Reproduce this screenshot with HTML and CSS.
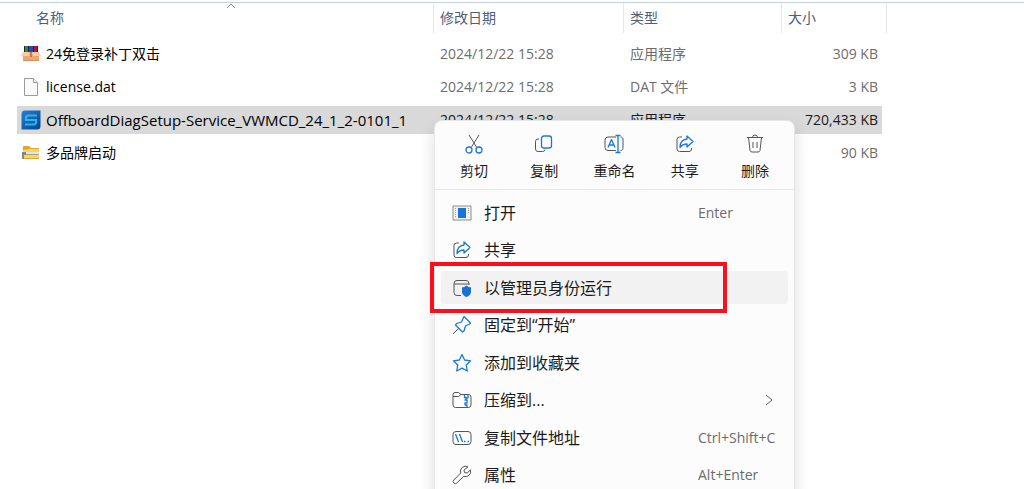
FILE: index.html
```html
<!DOCTYPE html>
<html lang="zh-CN">
<head>
    <meta charset="UTF-8">
    <meta name="viewport" content="width=device-width, initial-scale=1.0">
    <title>文件资源管理器</title>
    <link rel="stylesheet" href="styles.css">
</head>
<body>
    <!-- File list -->
    <main class="explorer">
        <table class="file-table">
            <thead>
                <tr>
                    <th class="col-name">
                        名称
                        <svg class="sort-caret" width="10" height="6" viewBox="0 0 10 6"><path d="M1 5l4-4 4 4"/></svg>
                    </th>
                    <th class="col-date">修改日期</th>
                    <th class="col-type">类型</th>
                    <th class="col-size">大小</th>
                </tr>
            </thead>
            <tbody>
                <tr>
                    <td class="name">
                        <div class="file">
                            <svg class="file-icon" width="20" height="20" viewBox="0 0 20 20">
                                <path fill="#20242c" d="M3 2h14v8H3z"/>
                                <path fill="#1f8f4a" d="M4 2h3v7H4z"/>
                                <path fill="#2448c8" d="M8 2h4v7H8z"/>
                                <path fill="#b01838" d="M13 2h3v7h-3z"/>
                                <path fill="#eda672" d="M2 9h16v8H2z"/>
                                <path fill="#fccb9e" d="M2 8h7l-1 4H0zM11 8h7l2 4h-8z"/>
                                <path fill="#c47a4b" d="M9 8h2v5H9z"/>
                                <path fill="#d98c58" d="M2 16h16v1H2z"/>
                            </svg>
                            24免登录补丁双击
                        </div>
                    </td>
                    <td>2024/12/22 15:28</td>
                    <td>应用程序</td>
                    <td class="size">309 KB</td>
                </tr>
                <tr>
                    <td class="name">
                        <div class="file">
                            <svg class="file-icon" width="20" height="20" viewBox="0 0 20 20">
                                <path fill="#fafafa" stroke="#9a9a9a" d="M3.500 1.500h9l4 4v13h-13z"/>
                                <path fill="#fff" stroke="#9a9a9a" d="M12.500 1.500v4h4"/>
                            </svg>
                            license.dat
                        </div>
                    </td>
                    <td>2024/12/22 15:28</td>
                    <td>DAT 文件</td>
                    <td class="size">3 KB</td>
                </tr>
                <tr class="selected">
                    <td class="name">
                        <div class="file">
                            <svg class="file-icon" width="20" height="20" viewBox="0 0 20 20">
                                <defs>
                                    <linearGradient id="appBlue" x1="0" y1="0" x2="1" y2="1">
                                        <stop offset="0" stop-color="#2b7fd0"/>
                                        <stop offset="1" stop-color="#07418f"/>
                                    </linearGradient>
                                </defs>
                                <path fill="url(#appBlue)" d="M4 0.500h15.500V16a3.500 3.500 0 0 1-3.500 3.500H0.500V4A3.500 3.500 0 0 1 4 0.500z"/>
                                <path fill="none" stroke="#25b5ee" stroke-width="2.200" d="M16 5.500H6.500L5 7v3h10v3l-1.500 1.500H4"/>
                            </svg>
                            OffboardDiagSetup-Service_VWMCD_24_1_2-0101_1
                        </div>
                    </td>
                    <td>2024/12/22 15:28</td>
                    <td>应用程序</td>
                    <td class="size">720,433 KB</td>
                </tr>
                <tr>
                    <td class="name">
                        <div class="file">
                            <svg class="file-icon" width="20" height="20" viewBox="0 0 20 20">
                                <path fill="#e5a52b" d="M2 4a1 1 0 0 1 1-1h5l2 2h8v3H2z"/>
                                <path fill="#fbd468" d="M2 7l7-1h9v10H2z"/>
                                <path fill="#e0a93a" d="M2 15h16v1H2z"/>
                                <path fill="#e8e6dc" d="M5 9h13v2H5z"/>
                                <path fill="#a9a187" d="M5 11h13v1H5z"/>
                                <path fill="#85868a" d="M1 9h4v3H3v4H1z"/>
                            </svg>
                            多品牌启动
                        </div>
                    </td>
                    <td></td>
                    <td></td>
                    <td class="size">90 KB</td>
                </tr>
            </tbody>
        </table>
    </main>

    <!-- Context menu -->
    <div class="context-menu">
        <div class="quick-actions">
            <button class="quick-btn">
                <svg class="icon" width="20" height="20" viewBox="0 0 20 20">
                    <path d="M5 1l7.500 12M15 1L7.500 13"/>
                    <circle class="blue" cx="5" cy="16" r="3"/>
                    <circle class="blue" cx="15" cy="16" r="3"/>
                </svg>
                剪切
            </button>
            <button class="quick-btn">
                <svg class="icon" width="20" height="20" viewBox="0 0 20 20">
                    <path d="M5 5H4a2.500 2.500 0 0 0-2.500 2.500V15A2.500 2.500 0 0 0 4 17.500h4.500a2.500 2.500 0 0 0 2.500-2"/>
                    <rect class="blue" x="7.500" y="2" width="10" height="12" rx="2.500"/>
                </svg>
                复制
            </button>
            <button class="quick-btn">
                <svg class="icon" width="20" height="20" viewBox="0 0 20 20">
                    <path d="M12 3H4a3 3 0 0 0-3 3v7.500a3 3 0 0 0 3 3h8M16.500 3a2.500 2.500 0 0 1 2.500 3v7.500a2.500 2.500 0 0 1-2.500 3"/>
                    <path class="blue" d="M4 13.500L7.500 5.500 11 13.500M5 11h5M11.500 1.500h5M14 1.500v17M11.500 18.500h5"/>
                </svg>
                重命名
            </button>
            <button class="quick-btn">
                <svg class="icon" width="20" height="20" viewBox="0 0 20 20">
                    <path d="M7 3H4.500A2.500 2.500 0 0 0 2 5.500V15a2.500 2.500 0 0 0 2.500 2.500h9.500a2.500 2.500 0 0 0 2.500-2.500v-1"/>
                    <path class="blue" d="M12 2l6 5.500-6 5.500V10c-3 0-5 1-7 3.500 0-5 3-8 7-8.500z"/>
                </svg>
                共享
            </button>
            <button class="quick-btn">
                <svg class="icon" width="20" height="20" viewBox="0 0 20 20">
                    <path d="M2 3.500h16M7.500 3.500a2.500 2.500 0 0 1 5 0M3.500 3.500l1.500 13a2 2 0 0 0 2 1.500h6a2 2 0 0 0 2-1.500l1.500-13M8 8v6M12 8v6"/>
                </svg>
                删除
            </button>
        </div>

        <div class="menu-list">
            <button class="menu-item">
                <svg class="icon" width="20" height="20" viewBox="0 0 20 20">
                    <rect x="1" y="3" width="18" height="14" fill="#f1f1f1" stroke="#8c8c8c"/>
                    <path stroke="#9f9f9f" stroke-dasharray="1 1" d="M3.500 5v10M16.500 5v6"/>
                    <rect x="6" y="5" width="8" height="10" fill="#1676d2" stroke="none"/>
                </svg>
                <span>打开</span>
                <kbd>Enter</kbd>
            </button>
            <button class="menu-item">
                <svg class="icon" width="20" height="20" viewBox="0 0 20 20">
                    <path d="M7 3H4.500A2.500 2.500 0 0 0 2 5.500V15a2.500 2.500 0 0 0 2.500 2.500h9.500a2.500 2.500 0 0 0 2.500-2.500v-1"/>
                    <path class="blue" d="M12 2l6 5.500-6 5.500V10c-3 0-5 1-7 3.500 0-5 3-8 7-8.500z"/>
                </svg>
                <span>共享</span>
            </button>
            <button class="menu-item active">
                <svg class="icon" width="20" height="20" viewBox="0 0 20 20">
                    <path d="M9 17.500H5A3 3 0 0 1 2 14.500v-9a3 3 0 0 1 3-3h9a3 3 0 0 1 3 3V7M2 6h15"/>
                    <path fill="#1a73d2" stroke="none" d="M14.500 7.500c1.500 1.300 3 1.800 4.500 1.800V14c0 2.500-2 4-4.500 5-2.500-1-4.500-2.500-4.500-5V9.300c1.500 0 3-.5 4.500-1.800z"/>
                </svg>
                <span>以管理员身份运行</span>
            </button>
            <button class="menu-item">
                <svg class="icon" width="20" height="20" viewBox="0 0 20 20">
                    <path d="M7 13l-6 6"/>
                    <path class="blue" d="M12 1.500L18.500 8l-1 1-4 2-1.500 5-1.500 1-7-7L4.500 8.500l5-1.500 2-4.500z"/>
                </svg>
                <span>固定到“开始”</span>
            </button>
            <button class="menu-item">
                <svg class="icon" width="20" height="20" viewBox="0 0 20 20">
                    <path class="blue" d="M10 1.500l2.600 5.500 6 .8-4.400 4.200 1.100 6-5.300-2.900L4.700 18l1.100-6L1.400 7.800l6-.8z"/>
                </svg>
                <span>添加到收藏夹</span>
            </button>
            <button class="menu-item">
                <svg class="icon" width="20" height="20" viewBox="0 0 20 20">
                    <path d="M1 6.500V4.500A2 2 0 0 1 3 2.500h3.500l2.500 2h7.500a2.500 2.500 0 0 1 2.500 2.500v8a2.500 2.500 0 0 1-2.500 2.500h-13A2.500 2.500 0 0 1 1 15V6.500h5.500l2.500-2"/>
                    <path class="blue" d="M12.500 5v2.500H14V10M16 5v3h-2M12.500 10H15v3h-2v2h2v2.500"/>
                </svg>
                <span>压缩到...</span>
                <svg class="chevron" width="8" height="12" viewBox="0 0 8 12"><path d="M1 1l6 5-6 5"/></svg>
            </button>
            <button class="menu-item">
                <svg class="icon" width="20" height="20" viewBox="0 0 20 20">
                    <rect x="1" y="3.500" width="18" height="13" rx="3"/>
                    <path class="blue" d="M3.500 6l3 8M7.500 6l3 8M12 13.500h1.500M15.500 13.500H17"/>
                </svg>
                <span>复制文件地址</span>
                <kbd>Ctrl+Shift+C</kbd>
            </button>
            <button class="menu-item">
                <svg class="icon" width="20" height="20" viewBox="0 0 20 20">
                    <path d="M16 2a5 5 0 0 0-7.300 6L1.800 15a2 2 0 0 0 3 3l7-6.700A5 5 0 0 0 18.400 5l-3.200 3-2.700-.5-.5-2.500z"/>
                </svg>
                <span>属性</span>
                <kbd>Alt+Enter</kbd>
            </button>
        </div>
    </div>

    <!-- Marks the menu entry to click -->
    <div class="highlight-box"></div>
</body>
</html>
```
FILE: styles.css
```css
* {
    margin: 0;
    padding: 0;
    box-sizing: border-box;
}

body {
    position: relative;
    min-height: 100vh;
    padding-top: 2px;
    overflow: hidden;
    background: #fff;
    color: #1b1b1b;
    font-family: "Open Sans", "Noto Sans CJK SC", sans-serif;
    font-size: 14px;
    line-height: 20px;
}

button {
    border: none;
    background: none;
    color: inherit;
    font: inherit;
}

/* File list */
.explorer {
    padding-left: 17px;
    border-top: 1px solid #c3d0e2;
}

.file-table {
    border-spacing: 0;
    table-layout: fixed;
    width: 870px;
}

.file-table th {
    position: relative;
    height: 37px;
    padding-left: 6px;
    padding-bottom: 7px;
    background: linear-gradient(#e8e8e8, #e8e8e8) right top / 1px 30px no-repeat;
    color: #4c607a;
    font-weight: 400;
    text-align: left;
}

.file-table .col-name {
    width: 417px;
    padding-left: 19px;
}

.file-table .col-date {
    width: 190px;
}

.file-table .col-type {
    width: 158px;
}

.sort-caret {
    position: absolute;
    top: 0;
    left: 209px;
    fill: none;
    stroke: #8a8a8a;
}

.file-table td {
    height: 33px;
    padding-left: 6px;
    border-bottom: 5px solid #fff;
    background-clip: padding-box;
    color: #6d6d6d;
    white-space: nowrap;
}

.file-table .name {
    padding-left: 4px;
    color: #000;
}

.file-table .size {
    padding-right: 4px;
    border-right: 5px solid #fff;
    text-align: right;
}

.file-table .selected td {
    background-color: #d9d9d9;
    color: #1b1b1b;
}

.file-table .selected .name {
    color: #000;
    font-size: 15px;
}

.file {
    display: flex;
    align-items: center;
    gap: 5px;
}

.file-icon {
    flex: none;
}

/* Context menu */
.context-menu {
    position: absolute;
    top: 120px;
    left: 434px;
    width: 361px;
    border: 1px solid #e6e6e6;
    border-radius: 8px;
    background: #fcfcfc;
    box-shadow: 0 8px 16px rgba(0, 0, 0, 0.14);
}

.quick-actions {
    display: grid;
    grid-template-columns: repeat(5, 1fr);
    padding: 13px 4px 8px;
    border-bottom: 1px solid #e6e6e6;
}

.quick-btn {
    display: flex;
    flex-direction: column;
    align-items: center;
    gap: 7px;
}

.icon {
    flex: none;
    fill: none;
    stroke: #555;
    stroke-linejoin: round;
}

.icon .blue {
    stroke: #1a78d4;
    stroke-width: 1.3;
}

.menu-list {
    display: grid;
    grid-template-rows: repeat(8, 1fr);
    height: 300px;
    margin: 4px 6px;
}

.menu-item {
    display: grid;
    grid-template-columns: 20px 1fr 90px;
    align-items: center;
    column-gap: 12px;
    height: 33px;
    margin: 2px 0;
    padding-left: 11px;
    border-radius: 4px;
    font-size: 16px;
    text-align: left;
}

.menu-item.active {
    background: #f2f2f2;
}

.menu-item kbd {
    color: #6b6b6b;
    font-family: inherit;
    font-size: 14px;
}

.chevron {
    justify-self: end;
    margin-right: 15px;
    fill: none;
    stroke: #666;
}

.highlight-box {
    position: absolute;
    top: 262px;
    left: 430px;
    width: 297px;
    height: 51px;
    border: 4px solid #fb0f1c;
    pointer-events: none;
}
```
